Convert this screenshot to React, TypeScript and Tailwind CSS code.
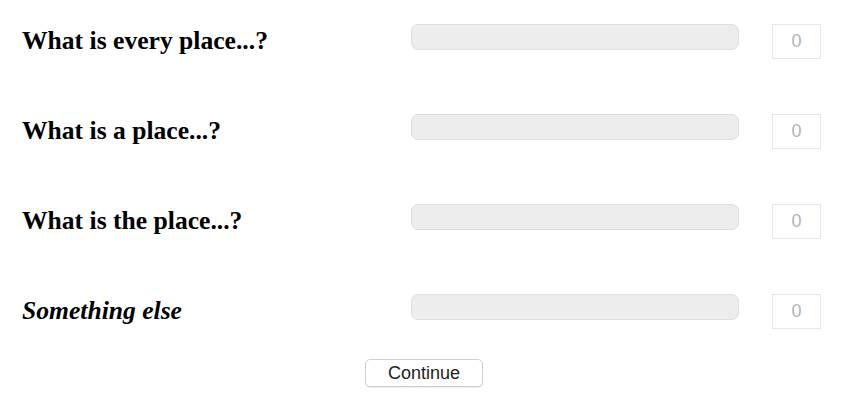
import React from "react";

const rows = [
  { label: "What is every place...?", italic: false },
  { label: "What is a place...?", italic: false },
  { label: "What is the place...?", italic: false },
  { label: "Something else", italic: true },
];

export default function App() {
  return (
    <div className="w-[844px] h-[400px] bg-white overflow-hidden pt-[24px]">
      <div className="flex flex-col gap-[55px]">
        {rows.map((row) => (
          <div key={row.label} className="flex items-start h-[35px]">
            <div className="w-[411px] h-[33px] pl-[22px] flex items-center">
              <span
                className={
                  "font-bold text-[25.6px] leading-none text-black whitespace-nowrap " +
                  (row.italic ? "italic" : "")
                }
                style={{ fontFamily: '"Liberation Serif", "Times New Roman", serif' }}
              >
                {row.label}
              </span>
            </div>
            <div className="w-[328px] h-[26px] rounded-[7px] bg-[#ededed] border border-[#dedede]" />
            <div
              className="ml-[33px] w-[49px] h-[35px] border border-[#e6e6e6] flex items-center justify-center text-[18px] text-[#b3b3b3]"
              style={{ fontFamily: '"Liberation Sans", Arial, sans-serif' }}
            >
              0
            </div>
          </div>
        ))}
      </div>
      <div className="flex justify-center pl-1 mt-[30px]">
        <button
          type="button"
          className="w-[118px] h-[28px] bg-white border border-[#cfcfcf] rounded-[5px] shadow-[0_1px_1px_rgba(0,0,0,0.08)] text-[18px] text-[#222] leading-none"
          style={{ fontFamily: '"Liberation Sans", Arial, sans-serif' }}
        >
          Continue
        </button>
      </div>
    </div>
  );
}
